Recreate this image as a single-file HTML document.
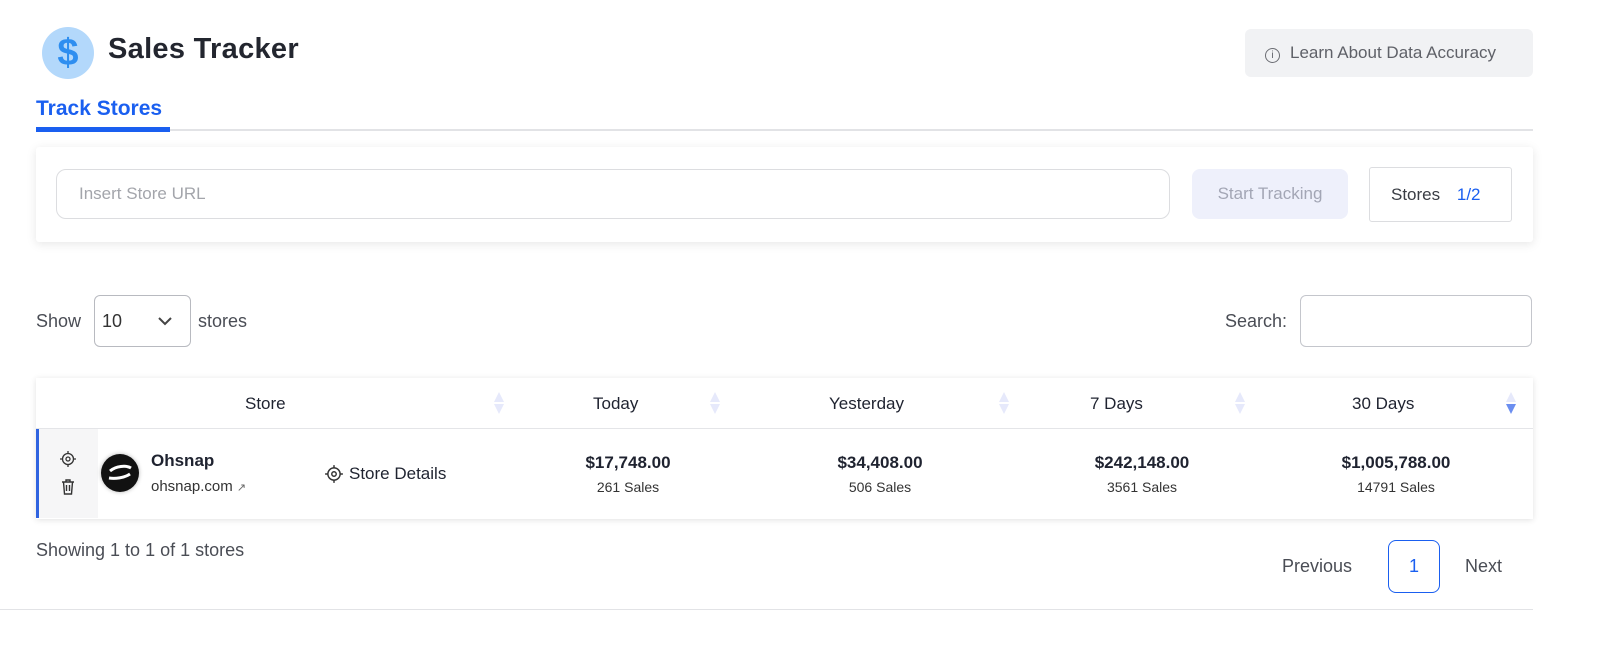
<!DOCTYPE html>
<html><head><meta charset="utf-8"><style>
*{box-sizing:border-box;margin:0;padding:0}
body{width:1600px;height:669px;background:#fff;font-family:"Liberation Sans",sans-serif;color:#1f2330;position:relative;overflow:hidden}
.abs{position:absolute}
.sort{position:absolute;width:10px;height:22px}
</style></head><body>
<div class="abs" style="left:42px;top:27px;width:52px;height:52px;border-radius:50%;background:#b3d8fb;color:#2e8ef0;font-size:38px;font-weight:bold;text-align:center;line-height:52px">$</div>
<div class="abs" style="left:108px;top:33px;font-size:29px;font-weight:bold;color:#23262f;letter-spacing:0.3px">Sales Tracker</div>
<div class="abs" style="left:1245px;top:29px;width:288px;height:48px;background:#f1f2f4;border-radius:6px;color:#5f6168;font-size:17px;line-height:48px;padding-left:20px">
<span style="display:inline-block;width:15px;height:15px;border:1.3px solid #6b6d73;border-radius:50%;font-size:10px;line-height:13px;text-align:center;vertical-align:0px;margin-right:10px">i</span>Learn About Data Accuracy</div>
<div class="abs" style="left:36px;top:97px;font-size:21px;font-weight:bold;color:#1a5ff0">Track Stores</div>
<div class="abs" style="left:36px;top:129px;width:1497px;height:2px;background:#e2e3e6"></div>
<div class="abs" style="left:36px;top:127px;width:134px;height:5px;background:#1a5ff0"></div>

<div class="abs" style="left:36px;top:147px;width:1497px;height:95px;background:#fff;box-shadow:0 2px 10px rgba(0,0,0,.1);border-radius:3px"></div>
<div class="abs" style="left:56px;top:169px;width:1114px;height:50px;border:1px solid #dcdde0;border-radius:10px;color:#a3a5ab;font-size:17px;line-height:48px;padding-left:22px">Insert Store URL</div>
<div class="abs" style="left:1192px;top:169px;width:156px;height:50px;background:#eef0fb;border-radius:8px;color:#a3a6b5;font-size:17px;line-height:50px;text-align:center">Start Tracking</div>
<div class="abs" style="left:1369px;top:167px;width:143px;height:55px;border:1px solid #dcdde0;border-radius:3px;font-size:17px;line-height:53px;padding-left:21px;color:#3a3d44">Stores <span style="color:#1a5ff0;margin-left:12px">1/2</span></div>

<div class="abs" style="left:36px;top:311px;font-size:18px;color:#4a4d55">Show</div>
<div class="abs" style="left:94px;top:295px;width:97px;height:52px;border:1px solid #b8bac0;border-radius:6px;font-size:18px;line-height:50px;padding-left:7px;color:#333">10
<svg class="abs" style="left:62px;top:19px" width="16" height="12" viewBox="0 0 16 12"><path d="M2 3l6 6 6-6" fill="none" stroke="#444" stroke-width="2"/></svg></div>
<div class="abs" style="left:198px;top:311px;font-size:18px;color:#4a4d55">stores</div>
<div class="abs" style="left:1225px;top:311px;font-size:18px;color:#4a4d55">Search:</div>
<div class="abs" style="left:1300px;top:295px;width:232px;height:52px;border:1px solid #c4c6cc;border-radius:6px"></div>

<div class="abs" style="left:36px;top:378px;width:1497px;height:141px;box-shadow:0 1px 6px rgba(0,0,0,.12);background:#fff"></div>
<div class="abs" style="left:36px;top:428px;width:1497px;height:1px;background:#e4e5e8"></div>
<div class="abs" style="left:36px;top:429px;width:62px;height:89px;background:#f6f6f7;border-left:3px solid #2f63e0"></div>
<div class="abs" style="left:245px;top:394px;font-size:17px">Store</div>
<div class="abs" style="left:593px;top:394px;font-size:17px">Today</div>
<div class="abs" style="left:829px;top:394px;font-size:17px">Yesterday</div>
<div class="abs" style="left:1090px;top:394px;font-size:17px">7 Days</div>
<div class="abs" style="left:1352px;top:394px;font-size:17px">30 Days</div>
<svg class="sort" style="left:494px;top:392px" viewBox="0 0 10 22"><path d="M5 0L10 10H0zM5 22L10 12H0z" fill="#e6e9fb"/></svg>
<svg class="sort" style="left:710px;top:392px" viewBox="0 0 10 22"><path d="M5 0L10 10H0zM5 22L10 12H0z" fill="#e6e9fb"/></svg>
<svg class="sort" style="left:999px;top:392px" viewBox="0 0 10 22"><path d="M5 0L10 10H0zM5 22L10 12H0z" fill="#e6e9fb"/></svg>
<svg class="sort" style="left:1235px;top:392px" viewBox="0 0 10 22"><path d="M5 0L10 10H0zM5 22L10 12H0z" fill="#e6e9fb"/></svg>
<svg class="sort" style="left:1505px;top:392px;width:12px" viewBox="0 0 10 22"><path d="M5 0L10 10H0z" fill="#e6e9fb"/><path d="M5 22L10 12H0z" fill="#6b8ef0"/></svg>

<svg class="abs" style="left:59px;top:450px" width="18" height="18" viewBox="0 0 18 18" fill="none" stroke="#333" stroke-width="1.3"><circle cx="9" cy="9" r="5.5"/><circle cx="9" cy="9" r="2"/><path d="M9 1v2.5M9 14.5V17M1 9h2.5M14.5 9H17"/></svg>
<svg class="abs" style="left:61px;top:479px" width="14" height="16" viewBox="0 0 14 16" fill="none" stroke="#333" stroke-width="1.4"><path d="M1 3h12M5 3V1h4v2M2.5 3l1 12h7l1-12M5.5 6v6M8.5 6v6"/></svg>
<div class="abs" style="left:101px;top:454px;width:38px;height:38px;border-radius:50%;background:#111;box-shadow:0 0 4px rgba(0,0,0,.3)">
<svg width="38" height="38" viewBox="0 0 38 38"><path d="M9 17c6-5 16-6 21-3M8 24c6 1 15 0 21-4" stroke="#fff" stroke-width="3" fill="none"/></svg></div>
<div class="abs" style="left:151px;top:451px;font-size:17px;font-weight:bold">Ohsnap</div>
<div class="abs" style="left:151px;top:478px;font-size:15px;color:#333">ohsnap.com <span style="font-size:11px;color:#666">&#x2197;</span></div>
<svg class="abs" style="left:324px;top:464px" width="20" height="20" viewBox="0 0 18 18" fill="none" stroke="#333" stroke-width="1.3"><circle cx="9" cy="9" r="5.5"/><circle cx="9" cy="9" r="2"/><path d="M9 1v2.5M9 14.5V17M1 9h2.5M14.5 9H17"/></svg>
<div class="abs" style="left:349px;top:464px;font-size:17px">Store Details</div>

<div class="abs" style="left:528px;top:453px;width:200px;text-align:center;font-size:17px;font-weight:bold">$17,748.00<div style="font-size:14px;font-weight:normal;margin-top:6px;color:#333">261 Sales</div></div>
<div class="abs" style="left:780px;top:453px;width:200px;text-align:center;font-size:17px;font-weight:bold">$34,408.00<div style="font-size:14px;font-weight:normal;margin-top:6px;color:#333">506 Sales</div></div>
<div class="abs" style="left:1042px;top:453px;width:200px;text-align:center;font-size:17px;font-weight:bold">$242,148.00<div style="font-size:14px;font-weight:normal;margin-top:6px;color:#333">3561 Sales</div></div>
<div class="abs" style="left:1296px;top:453px;width:200px;text-align:center;font-size:17px;font-weight:bold">$1,005,788.00<div style="font-size:14px;font-weight:normal;margin-top:6px;color:#333">14791 Sales</div></div>

<div class="abs" style="left:36px;top:540px;font-size:18px;color:#4a4d55">Showing 1 to 1 of 1 stores</div>
<div class="abs" style="left:1282px;top:556px;font-size:18px;color:#4a4d55">Previous</div>
<div class="abs" style="left:1388px;top:540px;width:52px;height:53px;border:1px solid #1a5ff0;border-radius:8px;color:#1a5ff0;font-size:18px;line-height:51px;text-align:center">1</div>
<div class="abs" style="left:1465px;top:556px;font-size:18px;color:#4a4d55">Next</div>
<div class="abs" style="left:0;top:609px;width:1533px;height:1px;background:#e2e3e6"></div>
</body></html>
